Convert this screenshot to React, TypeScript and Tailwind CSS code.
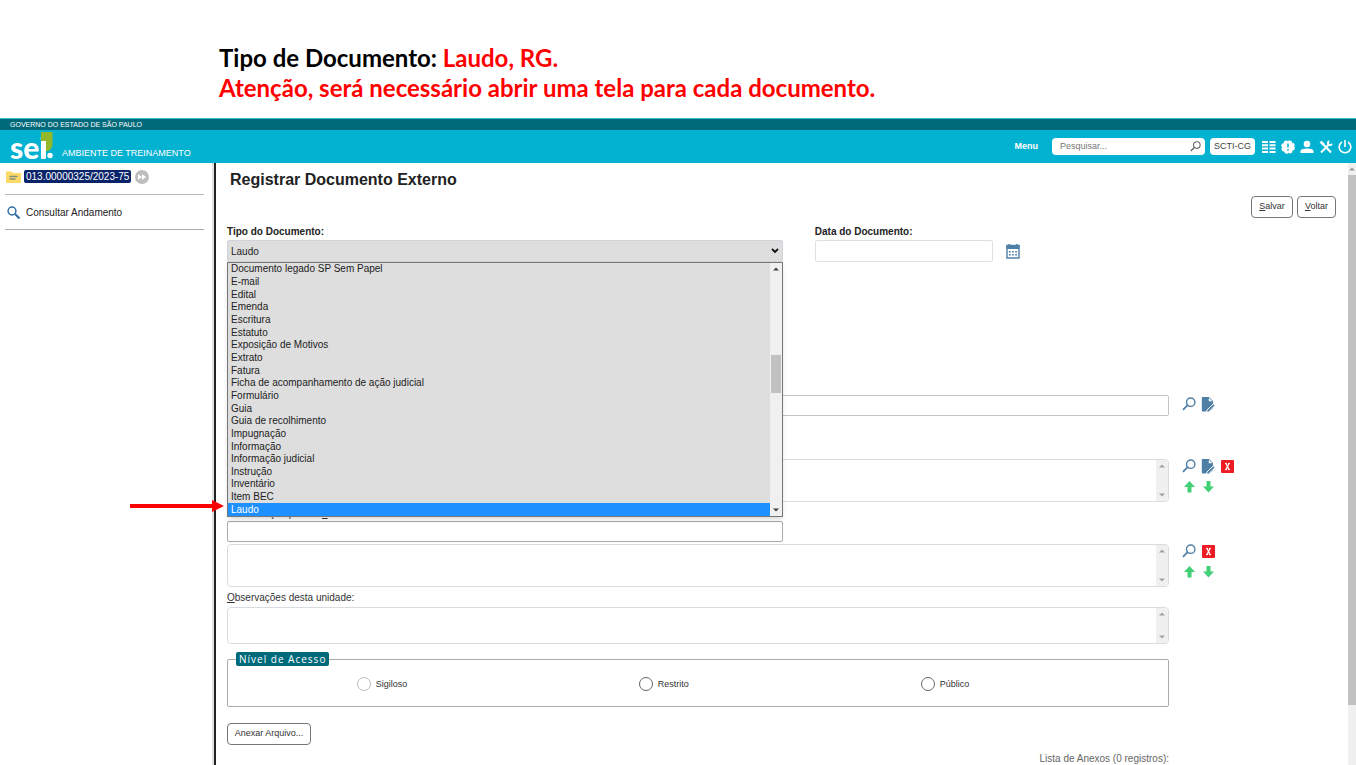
import React from "react";

const documentTypes = [
  "Documento legado SP Sem Papel",
  "E-mail",
  "Edital",
  "Emenda",
  "Escritura",
  "Estatuto",
  "Exposição de Motivos",
  "Extrato",
  "Fatura",
  "Ficha de acompanhamento de ação judicial",
  "Formulário",
  "Guia",
  "Guia de recolhimento",
  "Impugnação",
  "Informação",
  "Informação judicial",
  "Instrução",
  "Inventário",
  "Item BEC",
  "Laudo",
];

function Magnifier({ className }: { className: string }) {
  return (
    <svg viewBox="0 0 14 14" className={className} fill="none" stroke="currentColor" aria-hidden="true">
      <circle cx="8.7" cy="5.2" r="4.2" strokeWidth="1.4" />
      <path d="M5.6 8.200 1 12.8" strokeWidth="1.8" />
    </svg>
  );
}

function EditDocument() {
  return (
    <svg viewBox="0 0 14 15" className="h-[15px] w-[14px] shrink-0" aria-hidden="true">
      <path d="M1.500 0H8l4 4v7.500L8.500 14.500H1.500Q.8 14.500.8 13.800V.7Q.8 0 1.500 0Z" fill="#4f7fa6" />
      <path d="M7.800.8V4.300H11.300Z" fill="#fff" />
      <path d="M12.300 6.800 5.800 13.200v1.800h1.700L14 8.600Z" fill="#4f7fa6" stroke="#fff" strokeWidth="1" />
    </svg>
  );
}

function RemoveBox() {
  return (
    <svg viewBox="0 0 13 13" className="h-[13px] w-[13px]" aria-hidden="true">
      <rect width="13" height="13" rx="1" fill="#ed1c24" />
      <path d="M5 3.500 8 9.500M8 3.500 5 9.500" stroke="#fff" strokeWidth="1.300" />
      <path d="M4 3.400h2M7 3.400h2M4 9.600h2M7 9.600h2" stroke="#fff" strokeWidth="1" />
    </svg>
  );
}

function Arrow({ down = false }: { down?: boolean }) {
  return (
    <svg viewBox="0 0 11 12" className="h-3 w-[11px]" aria-hidden="true">
      <path
        d={down ? "M3.500 0h4v5.500H11L5.500 11.500 0 5.500h3.500Z" : "M3.500 11.500h4V6H11L5.500 0 0 6h3.500Z"}
        fill="#42d077"
      />
    </svg>
  );
}

function IconButton({ label, children }: { label: string; children: React.ReactNode }) {
  return (
    <button type="button" aria-label={label} className="flex h-[14px] w-[14px] items-center justify-center">
      {children}
    </button>
  );
}

function Scroller({ dark = false }: { dark?: boolean }) {
  const color = dark ? "#404040" : "#a0a0a0";
  return (
    <div className="flex h-full w-3 flex-col items-center justify-between bg-[#f0f0f0] py-1">
      <svg viewBox="0 0 6 4" className="h-1 w-[6px]" aria-hidden="true">
        <path d="M0 3.500 3 .5l3 3Z" fill={color} />
      </svg>
      <svg viewBox="0 0 6 4" className="h-1 w-[6px]" aria-hidden="true">
        <path d="M0 .5 3 3.500l3-3Z" fill={color} />
      </svg>
    </div>
  );
}

function TextBlock({ label, height, id }: { label: string; height: string; id?: string }) {
  return (
    <div className={`flex flex-1 overflow-hidden rounded-sm border border-[#d9dde2] ${height}`}>
      <textarea id={id} aria-label={label} className="h-full flex-1 resize-none overflow-hidden px-1 outline-none" />
      <Scroller />
    </div>
  );
}

function Actions({ children }: { children?: React.ReactNode }) {
  return <div className="flex w-[179px] shrink-0 flex-col gap-[7px] pl-[13px]">{children}</div>;
}

function Header() {
  return (
    <header className="text-white">
      <div className="flex h-3 items-center border-t border-[#35bdd4] bg-[#006a7b] pl-[10px] text-[7px] leading-none">
        GOVERNO DO ESTADO DE SÃO PAULO
      </div>
      <div className="flex h-[33px] items-center bg-[#03b1d0]">
        <a href="#" className="flex items-end gap-[9px] pl-[10px]">
          <span className="relative flex h-[33px] w-[43px] items-end">
            <span className="font-['Lato',sans-serif] text-[30px] leading-[31px] font-black">sei</span>
            <svg viewBox="0 0 13 28" className="absolute top-[2px] right-0 h-7 w-[13px]" aria-hidden="true">
              <path d="M1 0h11.500v12q0 5-4.500 7H1Z" fill="#93b92a" />
              <path d="M1 9h5v17H1Z" fill="#fff" />
              <circle cx="10" cy="23.500" r="2.700" fill="#fff" />
            </svg>
          </span>
          <span className="pb-[2px] text-[9px] leading-4">AMBIENTE DE TREINAMENTO</span>
        </a>
        <div className="ml-auto flex items-center pr-1">
          <a href="#" className="mr-[14px] text-[9px] font-bold">Menu</a>
          <div className="flex h-[17px] w-[153px] items-center rounded-sm bg-white pr-1 pl-2 text-[#666]">
            <input aria-label="Pesquisar" placeholder="Pesquisar..." className="min-w-0 flex-1 text-[9px] outline-none placeholder:text-[#777]" />
            <Magnifier className="h-[11px] w-[11px]" />
          </div>
          <button type="button" className="ml-[5px] h-[17px] w-[45px] rounded-sm bg-white text-[9px] text-[#444]">SCTI-CG</button>
          <div className="ml-[7px] flex items-center gap-[5px]">
            <button type="button" aria-label="Painel">
              <svg viewBox="0 0 14 14" className="h-[14px] w-[14px]" aria-hidden="true">
                <path d="M0 2h6M0 5.300h6M0 8.600h6M0 12h6M7.500 2h6M7.500 5.300h6M7.500 8.600h6M7.500 12h6" stroke="#fff" strokeWidth="2" />
              </svg>
            </button>
            <button type="button" aria-label="Avisos">
              <svg viewBox="0 0 14 14" className="h-[14px] w-[14px]" aria-hidden="true">
                <circle cx="7" cy="7" r="6" fill="#fff" stroke="#fff" strokeWidth="1.800" strokeDasharray="3.100 1.600" />
                <path d="M7 3.500v4M7 9v1.500" stroke="#03b1d0" strokeWidth="1.500" />
              </svg>
            </button>
            <button type="button" aria-label="Usuário">
              <svg viewBox="0 0 14 14" className="h-[14px] w-[14px]" fill="#fff" aria-hidden="true">
                <circle cx="7" cy="4" r="3.300" />
                <path d="M.5 13v-2Q.5 8.500 7 8.500T13.500 11v2Z" />
              </svg>
            </button>
            <button type="button" aria-label="Configurações">
              <svg viewBox="0 0 14 14" className="h-[14px] w-[14px]" fill="none" stroke="#fff" aria-hidden="true">
                <path d="M2 12.500 10 4.500M4 4 12 12.500" strokeWidth="2" />
                <path d="M1 2.500 2.500 1l2.800 3-1.300 1.300Z" fill="#fff" strokeWidth=".8" />
                <path d="M10 1Q8 3 9.500 4.500T13 4" strokeWidth="1.800" />
              </svg>
            </button>
            <button type="button" aria-label="Sair">
              <svg viewBox="0 0 14 14" className="h-[14px] w-[14px]" fill="none" stroke="#fff" strokeWidth="1.600" aria-hidden="true">
                <path d="M7 0v7M4 2a5.800 5.800 0 1 0 6 0" />
              </svg>
            </button>
          </div>
        </div>
      </div>
    </header>
  );
}

function Sidebar() {
  return (
    <aside className="w-[216px] shrink-0 border-r-2 border-[#222] text-[10px]">
      <div className="h-full border-r-2 border-[#e2e2e2] pr-2 pl-[5px]">
        <div className="flex h-8 items-center gap-[2px] border-b border-[#bbb] pb-1">
          <svg viewBox="0 0 17 14" className="h-[14px] w-[17px]" aria-hidden="true">
            <path d="M1 1.500h5l2 1.500h7q1 0 1 1V12q0 1-1 1H2q-1 0-1-1Z" fill="#ffd966" />
            <path d="M4.500 6.500h8M4.500 9h6" stroke="#7f8f80" strokeWidth="1.300" />
          </svg>
          <a href="#" className="rounded-xs bg-[#0a246a] px-[2px] leading-[13px] text-white">013.00000325/2023-75</a>
          <svg viewBox="0 0 14 14" className="ml-[2px] h-[14px] w-[14px]" aria-hidden="true">
            <circle cx="7" cy="7" r="7" fill="#bdbdbd" />
            <path d="M3 4v6l4-3ZM7 4v6l4-3Z" fill="#fff" />
          </svg>
        </div>
        <a href="#" className="flex h-[35px] items-center gap-[6px] border-b border-[#aaa] pl-[2px] text-[#222]">
          <svg viewBox="0 0 13 13" className="h-[13px] w-[13px]" fill="none" stroke="#2f6da3" aria-hidden="true">
            <circle cx="5" cy="5" r="3.900" strokeWidth="1.500" />
            <path d="m8 8 4.500 4.500" strokeWidth="2" />
          </svg>
          Consultar Andamento
        </a>
      </div>
    </aside>
  );
}

function TypeList() {
  return (
    <div className="absolute inset-x-0 top-full z-10 h-[255px] border border-[#777] bg-[#dedede] shadow-md">
      <div className="flex h-full">
        <ul role="listbox" aria-label="Tipos de documento" className="flex min-w-0 flex-1 flex-col text-[10px] leading-none">
          {documentTypes.map((name) => (
            <li
              key={name}
              role="option"
              aria-selected={name === "Laudo"}
              className="flex min-h-0 flex-1 items-center pl-[3px] text-[#222] aria-selected:bg-[#1e90ff] aria-selected:text-white"
            >
              {name}
            </li>
          ))}
        </ul>
        <div className="relative">
          <Scroller dark />
          <div className="absolute inset-x-px top-[92px] h-[38px] bg-[#c1c1c1]" />
        </div>
      </div>
      <svg viewBox="0 0 94 12" className="absolute right-full bottom-1 mr-1 h-3 w-[94px]" aria-hidden="true">
        <path d="M0 4h82V0l12 6-12 6V8H0Z" fill="#f00" />
      </svg>
    </div>
  );
}

function AccessOption({ label, muted = false }: { label: string; muted?: boolean }) {
  return (
    <label className="flex w-[30%] shrink-0 items-center gap-[5px] text-[9px] leading-4">
      <input
        type="radio"
        name="acesso"
        className={`h-[14px] w-[14px] appearance-none rounded-full border ${muted ? "border-[#bbb]" : "border-[#666]"}`}
      />
      {label}
    </label>
  );
}

export default function App() {
  return (
    <div className="flex h-screen flex-col overflow-hidden bg-white font-['Liberation_Sans',Arial,sans-serif] text-[#333]">
      <div className="h-[118px] shrink-0 pt-[43px] pl-[219px] font-['Lato',sans-serif] text-[24px] leading-[30px] font-bold text-[#f00]">
        <p><span className="text-black">Tipo de Documento:</span> Laudo, RG.</p>
        <p>Atenção, será necessário abrir uma tela para cada documento.</p>
      </div>
      <Header />
      <div className="flex min-h-0 flex-1">
        <Sidebar />
        <main className="min-w-0 flex-1 pt-[7px] pl-[11px] text-[10px]">
          <h1 className="h-5 pl-[3px] text-[16px] leading-5 font-bold text-[#222]">Registrar Documento Externo</h1>
          <div className="mt-[6px] flex justify-end gap-1 pr-3">
            <button type="button" className="h-[22px] w-[42px] rounded-sm border border-[#777] text-[9px]"><u>S</u>alvar</button>
            <button type="button" className="h-[22px] w-[39px] rounded-sm border border-[#777] text-[9px]"><u>V</u>oltar</button>
          </div>
          <div className="mt-[6px] flex">
            <div className="flex flex-1">
              <div className="w-[59%]">
                <label htmlFor="tipo" className="block h-4 leading-4 font-bold text-[#222]">Tipo do Documento:</label>
                <div className="relative">
                  <select id="tipo" className="block h-[22px] w-full appearance-none rounded-xs border border-[#ced4da] bg-[#dedede] pl-[3px] text-[#222]">
                    <option>Laudo</option>
                  </select>
                  <svg viewBox="0 0 8 6" className="pointer-events-none absolute top-2 right-1 h-[6px] w-2" fill="none" stroke="#111" strokeWidth="1.800" aria-hidden="true">
                    <path d="m1 1 3 3 3-3" />
                  </svg>
                  <TypeList />
                </div>
              </div>
              <div className="pl-8">
                <label htmlFor="data" className="block h-4 leading-4 font-bold text-[#222]">Data do Documento:</label>
                <div className="flex items-center gap-[13px]">
                  <input id="data" className="h-[22px] w-[178px] rounded-xs border border-[#dde0e4] px-1 outline-none" />
                  <button type="button" aria-label="Selecionar data">
                    <svg viewBox="0 0 14 15" className="h-[15px] w-[14px]" aria-hidden="true">
                      <path d="M1 1.500h12V14H1Z" fill="#fff" stroke="#4f7fa6" strokeWidth="1.400" />
                      <path d="M.5 1h13v4H.5ZM2.500 0h1.500v2H2.500ZM10 0h1.500v2H10Z" fill="#4f7fa6" />
                      <path d="M3 7.700h8M3 10.700h8" stroke="#4f7fa6" strokeWidth="1.500" strokeDasharray="1.700 1.400" />
                    </svg>
                  </button>
                </div>
              </div>
            </div>
            <Actions />
          </div>

          <div className="mt-[133px] flex">
            <input aria-label="Remetente" className="h-[21px] flex-1 rounded-xs border border-[#c4c4c4] px-1 outline-none" />
            <Actions>
              <div className="flex gap-[5px] pt-[2px]">
                <IconButton label="Pesquisar remetente"><Magnifier className="h-[14px] w-[14px] text-[#4f7fa6]" /></IconButton>
                <IconButton label="Alterar remetente"><EditDocument /></IconButton>
              </div>
            </Actions>
          </div>

          <div className="mt-[43px] flex">
            <TextBlock label="Interessados" height="h-[43px]" />
            <Actions>
              <div className="flex gap-[5px]">
                <IconButton label="Pesquisar interessado"><Magnifier className="h-[14px] w-[14px] text-[#4f7fa6]" /></IconButton>
                <IconButton label="Alterar interessado"><EditDocument /></IconButton>
                <IconButton label="Remover interessado"><RemoveBox /></IconButton>
              </div>
              <div className="flex gap-[5px]">
                <IconButton label="Mover interessado acima"><Arrow /></IconButton>
                <IconButton label="Mover interessado abaixo"><Arrow down /></IconButton>
              </div>
            </Actions>
          </div>

          <label htmlFor="assunto" className="mt-1 block h-[15px] leading-4">Classificação por Ass<u>u</u>ntos:</label>
          <div className="flex">
            <div className="flex flex-1">
              <input id="assunto" className="h-[21px] w-[59%] rounded-xs border border-[#a9a9a9] px-1 outline-none" />
            </div>
            <Actions />
          </div>
          <div className="mt-[2px] flex">
            <TextBlock label="Assuntos" height="h-[43px]" />
            <Actions>
              <div className="flex gap-[5px]">
                <IconButton label="Pesquisar assunto"><Magnifier className="h-[14px] w-[14px] text-[#4f7fa6]" /></IconButton>
                <IconButton label="Remover assunto"><RemoveBox /></IconButton>
              </div>
              <div className="flex gap-[5px]">
                <IconButton label="Mover assunto acima"><Arrow /></IconButton>
                <IconButton label="Mover assunto abaixo"><Arrow down /></IconButton>
              </div>
            </Actions>
          </div>

          <label htmlFor="observacoes" className="mt-[3px] block h-4 leading-4"><u>O</u>bservações desta unidade:</label>
          <div className="mt-px flex">
            <TextBlock id="observacoes" label="Observações desta unidade" height="h-[37px]" />
            <Actions />
          </div>

          <div className="mt-2 flex">
            <fieldset className="h-[55px] min-w-0 flex-1 rounded-xs border border-[#aaa]">
              <legend className="ml-2 rounded-xs bg-[#006a7b] px-[3px] font-['Open_Sans',sans-serif] text-[10px] leading-[14px] font-medium tracking-widest text-white">
                Nível de Acesso
              </legend>
              <div className="flex pt-[10px]">
                <span className="w-[13.7%] shrink-0" />
                <AccessOption label="Sigiloso" muted />
                <AccessOption label="Restrito" />
                <AccessOption label="Público" />
              </div>
            </fieldset>
            <Actions />
          </div>

          <div className="mt-4 flex">
            <div className="flex-1">
              <button type="button" className="block h-[22px] w-[84px] rounded-sm border border-[#777] text-[9px]">Anexar Arquivo...</button>
              <p className="mt-[6px] text-right leading-4 text-[#666]">Lista de Anexos (0 registros):</p>
            </div>
            <Actions />
          </div>
        </main>
        <div className="flex w-2 shrink-0 flex-col items-center bg-[#f0f0f0]">
          <svg viewBox="0 0 6 4" className="my-1 h-1 w-[6px] shrink-0" aria-hidden="true">
            <path d="M0 3.500 3 .5l3 3Z" fill="#999" />
          </svg>
          <div className="h-[88%] w-full bg-[#c1c1c1]" />
        </div>
      </div>
    </div>
  );
}
